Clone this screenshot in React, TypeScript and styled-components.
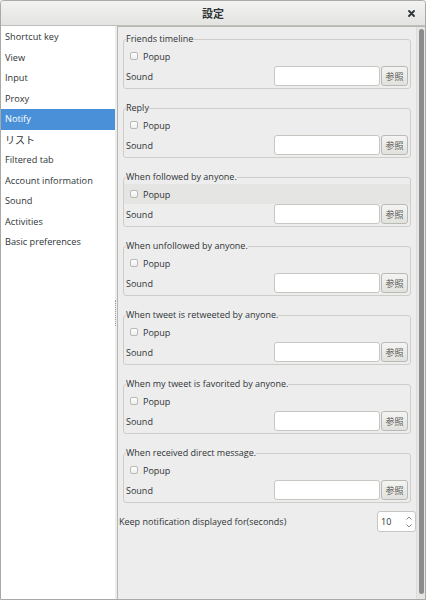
import React from 'react';
import styled, { createGlobalStyle } from 'styled-components';

const GlobalStyle = createGlobalStyle`
  html, body {
    margin: 0;
    padding: 0;
    background: #ededed;
  }
  body {
    font-family: "Open Sans", "Noto Sans CJK JP", sans-serif;
    color: #2e3436;
  }
  * {
    box-sizing: border-box;
  }
`;

const Window = styled.div`
  width: 426px;
  height: 600px;
  display: flex;
  flex-direction: column;
  border: 1px solid #a9a9a6;
  border-radius: 4px 4px 0 0;
  overflow: hidden;
  background: #ededed;
`;

const TitleBar = styled.div`
  height: 25px;
  flex: none;
  display: grid;
  grid-template-columns: 1fr auto 1fr;
  align-items: center;
  background: linear-gradient(#f3f3f2, #e3e3e1);
  border-bottom: 1px solid #bebebb;
`;

const Title = styled.div`
  grid-column: 2;
  font-family: "Noto Sans CJK JP", sans-serif;
  font-weight: bold;
  font-size: 11px;
  color: #2e3436;
  padding-bottom: 1px;
`;

const CloseButton = styled.div`
  grid-column: 3;
  justify-self: end;
  width: 7px;
  height: 7px;
  margin-right: 10px;
  display: flex;
`;

const Body = styled.div`
  flex: 1;
  min-height: 0;
  display: flex;
`;

const Sidebar = styled.div`
  width: 114px;
  flex: none;
  background: #ffffff;
  padding-top: 1px;
`;

const SideItem = styled.div<{ $selected?: boolean }>`
  height: 20.5px;
  line-height: 20.5px;
  padding-left: 4px;
  font-size: 9.2px;
  white-space: nowrap;
  background: ${({ $selected }) => ($selected ? '#4a90d9' : 'transparent')};
  color: ${({ $selected }) => ($selected ? '#ffffff' : '#2e3436')};
`;

const CjkItem = styled.span`
  font-family: "Noto Sans CJK JP", sans-serif;
  font-size: 10px;
`;

const Handle = styled.div`
  width: 2px;
  flex: none;
  display: flex;
  align-items: center;
  justify-content: center;
`;

const HandleDots = styled.div`
  width: 1px;
  height: 26px;
  border-left: 1px dotted #9a9a98;
  margin-left: -2px;
`;

const Pane = styled.div`
  flex: 1;
  display: flex;
  border-left: 1px solid #b6b6b3;
  border-top: 1px solid #b6b6b3;
`;

const PaneContent = styled.div`
  flex: 1;
  padding-top: 5px;
  display: flex;
  flex-direction: column;
  font-size: 9px;
`;

const FrameList = styled.div`
  display: flex;
  flex-direction: column;
  gap: 12px;
  margin: 0 5px;
`;

const Frame = styled.fieldset`
  margin: 0;
  padding: 0 2px 2px 2px;
  border: 1px solid #cfcdc9;
  border-radius: 3px;
  min-width: 0;
`;

const Legend = styled.legend`
  padding: 0;
  font-size: 9px;
  line-height: 14px;
`;

const CheckRow = styled.div<{ $hover?: boolean }>`
  height: 20px;
  display: flex;
  align-items: center;
  margin: 0 -2px;
  padding: 0 2px;
  background: ${({ $hover }) => ($hover ? '#e5e5e3' : 'transparent')};
`;

const CheckBox = styled.span`
  width: 8px;
  height: 8px;
  margin: 0 5px 0 4px;
  border: 1px solid #b8b8b5;
  border-radius: 2px;
  background: linear-gradient(#ffffff, #eeeeed);
`;

const SoundRow = styled.div`
  height: 20px;
  display: flex;
  align-items: center;
`;

const SoundLabel = styled.span`
  flex: 1;
`;

const Entry = styled.div`
  width: 106px;
  height: 20px;
  background: #ffffff;
  border: 1px solid #c9c6c2;
  border-radius: 3px;
`;

const BrowseButton = styled.div`
  width: 27px;
  height: 20px;
  margin-left: 1px;
  display: flex;
  align-items: center;
  justify-content: center;
  font-family: "Noto Sans CJK JP", sans-serif;
  font-size: 9px;
  color: #555753;
  background: linear-gradient(#f4f4f3, #e1e1de);
  border: 1px solid #b9b9b6;
  border-radius: 3px;
`;

const KeepRow = styled.div`
  margin-top: 8px;
  height: 21px;
  display: flex;
  align-items: center;
  justify-content: space-between;
  padding-left: 1px;
`;

const SpinBox = styled.div`
  width: 39px;
  height: 21px;
  display: flex;
  align-items: center;
  background: #ffffff;
  border: 1px solid #c9c6c2;
  border-radius: 3px;
  padding-left: 3px;
`;

const SpinValue = styled.span`
  flex: 1;
`;

const SpinArrows = styled.div`
  width: 9px;
  display: flex;
  flex-direction: column;
  align-items: center;
  gap: 4px;
  margin-right: 2px;
`;

const Scrollbar = styled.div`
  width: 9px;
  flex: none;
  padding: 2px 2px 5px 2px;
  border-left: 1px solid #dcdcda;
  background: #e6e6e5;
`;

const Thumb = styled.div`
  width: 5px;
  height: 100%;
  background: #8b8c8c;
  border-radius: 3px;
`;

const sections = [
  { title: 'Friends timeline' },
  { title: 'Reply' },
  { title: 'When followed by anyone.', hover: true },
  { title: 'When unfollowed by anyone.' },
  { title: 'When tweet is retweeted by anyone.' },
  { title: 'When my tweet is favorited by anyone.' },
  { title: 'When received direct message.' },
];

const menu = [
  'Shortcut key',
  'View',
  'Input',
  'Proxy',
  'Notify',
  'リスト',
  'Filtered tab',
  'Account information',
  'Sound',
  'Activities',
  'Basic preferences',
];

const App: React.FC = () => {
  return (
    <>
      <GlobalStyle />
      <Window>
        <TitleBar>
          <Title>設定</Title>
          <CloseButton>
            <svg width="7" height="7" viewBox="0 0 7 7">
              <path d="M1 1 L6 6 M6 1 L1 6" stroke="#2e3436" strokeWidth="1.8" strokeLinecap="round" />
            </svg>
          </CloseButton>
        </TitleBar>
        <Body>
          <Sidebar>
            {menu.map((item) => (
              <SideItem key={item} $selected={item === 'Notify'}>
                {item === 'リスト' ? <CjkItem>{item}</CjkItem> : item}
              </SideItem>
            ))}
          </Sidebar>
          <Handle>
            <HandleDots />
          </Handle>
          <Pane>
            <PaneContent>
              <FrameList>
                {sections.map((s) => (
                  <Frame key={s.title}>
                    <Legend>{s.title}</Legend>
                    <CheckRow $hover={s.hover}>
                      <CheckBox />
                      Popup
                    </CheckRow>
                    <SoundRow>
                      <SoundLabel>Sound</SoundLabel>
                      <Entry />
                      <BrowseButton>参照</BrowseButton>
                    </SoundRow>
                  </Frame>
                ))}
              </FrameList>
              <KeepRow>
                <span>Keep notification displayed for(seconds)</span>
                <SpinBox>
                  <SpinValue>10</SpinValue>
                  <SpinArrows>
                    <svg width="6" height="4" viewBox="0 0 6 4">
                      <path d="M0.5 3.5 L3 1 L5.5 3.5" stroke="#888a85" strokeWidth="1" fill="none" />
                    </svg>
                    <svg width="6" height="4" viewBox="0 0 6 4">
                      <path d="M0.5 0.5 L3 3 L5.5 0.5" stroke="#888a85" strokeWidth="1" fill="none" />
                    </svg>
                  </SpinArrows>
                </SpinBox>
              </KeepRow>
            </PaneContent>
            <Scrollbar>
              <Thumb />
            </Scrollbar>
          </Pane>
        </Body>
      </Window>
    </>
  );
};

export default App;
